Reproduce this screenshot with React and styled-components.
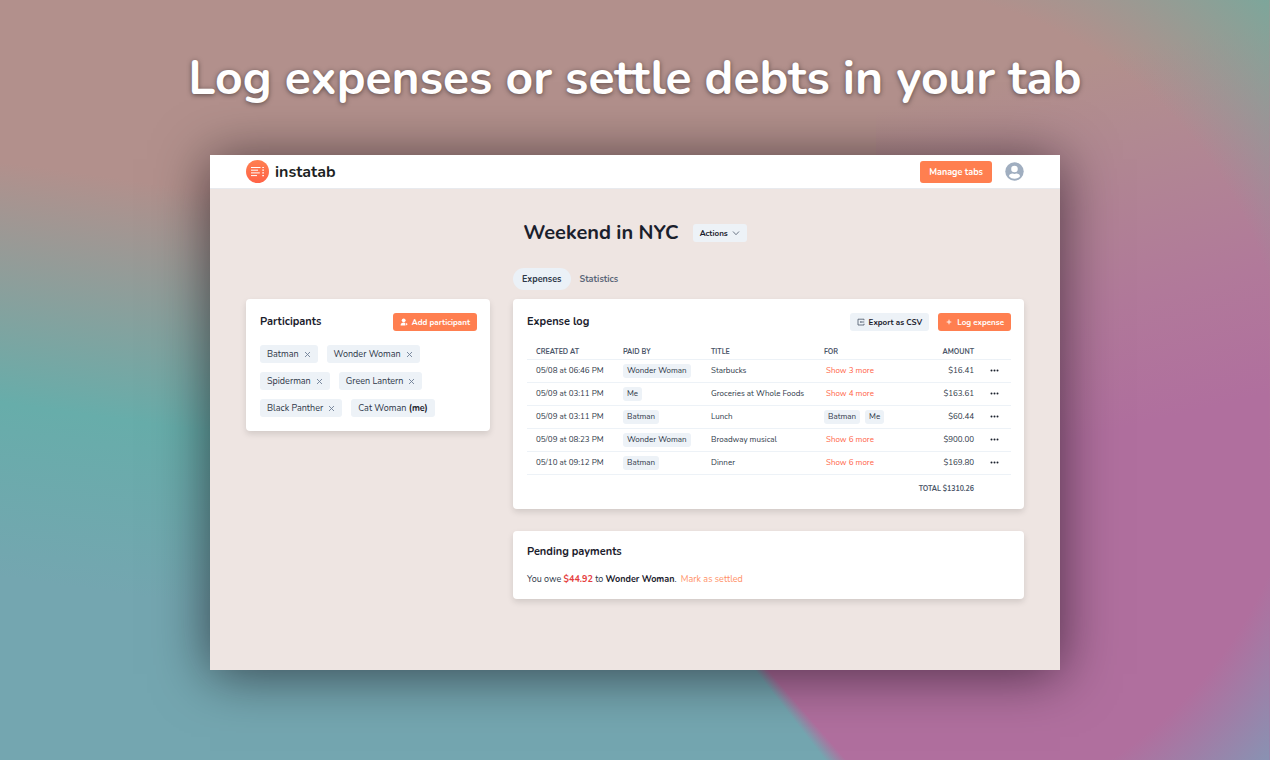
import React from "react";
import styled, { createGlobalStyle } from "styled-components";

const GlobalStyle = createGlobalStyle`
  * {
    box-sizing: border-box;
  }
  body {
    margin: 0;
    font-family: Nunito, "Open Sans", "Noto Sans", sans-serif;
    color: #1a202c;
  }
  button {
    font-family: inherit;
    border: 0;
    cursor: pointer;
    padding: 0;
  }
  a {
    text-decoration: none;
  }
`;

const Page = styled.div`
  min-height: 100vh;
  padding: 48px 16px 90px;
  display: flex;
  flex-direction: column;
  align-items: center;
  background:
    radial-gradient(circle at 0% 105%, rgba(120, 168, 156, 0) 410px, rgba(120, 168, 156, 0.95) 565px) right top / 31% 50% no-repeat,
    radial-gradient(circle at 0% 5%, rgba(130, 152, 182, 0) 430px, rgba(130, 152, 182, 0.95) 545px) right bottom / 31% 50% no-repeat,
    linear-gradient(188deg, #b2908c 28%, #67adaa 57%, #74a6b0 78%) left top / 40% 100% no-repeat,
    linear-gradient(167deg, #b2908c 13%, #b18a91 22%, #b1799a 42%, #b06f9e 57%) right top / 31% 100% no-repeat,
    conic-gradient(
      from 0deg at 50% 68%,
      #b2908c 0deg,
      #b2908c 38deg,
      #b06f9e 90deg,
      #b06f9e 139deg,
      #74a6b0 142deg,
      #74a6b0 250deg,
      #67adaa 279deg,
      #b2908c 300deg,
      #b2908c 360deg
    );
`;

const Headline = styled.h1`
  margin: 0 0 47px;
  font-size: 48px;
  line-height: 60px;
  font-weight: 700;
  text-align: center;
  color: #fff;
  text-shadow: 0 1px 5px rgba(0, 0, 0, 0.5);
`;

const Window = styled.div`
  width: 100%;
  max-width: 850px;
  flex: 1;
  background: #eee5e2;
  box-shadow: 0 4px 52px rgba(10, 0, 10, 0.6);
`;

const Navbar = styled.header`
  display: flex;
  align-items: center;
  justify-content: space-between;
  height: 34px;
  padding: 0 36px;
  background: #fff;
  border-bottom: 1px solid #e8eaee;
`;

const Brand = styled.a`
  display: flex;
  align-items: center;
  gap: 6px;
  font-size: 16px;
  font-weight: 700;
  color: #1d1f23;
`;

const NavRight = styled.div`
  display: flex;
  align-items: center;
  gap: 13px;
`;

const Button = styled.button`
  display: flex;
  align-items: center;
  justify-content: center;
  gap: 4px;
  height: ${({ $tall }) => ($tall ? "22px" : "18px")};
  padding: 0 ${({ $tall }) => ($tall ? "9px" : "7px")};
  border-radius: 3px;
  font-size: ${({ $tall }) => ($tall ? "9px" : "8px")};
  font-weight: 700;
  white-space: nowrap;
  color: ${({ $primary }) => ($primary ? "#fff" : "#1a202c")};
  background: ${({ $primary }) => ($primary ? "#ff7f50" : "#edf2f7")};
`;

const AvatarButton = styled.button`
  display: flex;
  background: none;
`;

const Main = styled.main`
  padding: 32px 36px 71px;
`;

const TitleRow = styled.div`
  display: flex;
  align-items: center;
  justify-content: center;
  gap: 14px;
  height: 24px;

  h2 {
    margin: 0;
    font-size: 20px;
    line-height: 24px;
    font-weight: 700;
  }
`;

const Columns = styled.div`
  display: grid;
  grid-template-columns: 244px minmax(0, 1fr);
  column-gap: 23px;
  align-items: start;
  margin-top: 23px;
`;

const Tabs = styled.div`
  grid-column: 2;
  display: flex;
  height: 22px;
  margin-bottom: 9px;
`;

const Tab = styled.button`
  padding: 0 9px;
  border-radius: 11px;
  font-size: 9px;
  font-weight: 700;
  color: ${({ $active }) => ($active ? "#2d3748" : "#5a6578")};
  background: ${({ $active }) => ($active ? "#ebf1f7" : "none")};
`;

const Card = styled.section`
  padding: ${({ $padding }) => $padding || "14px 13px 14px 14px"};
  border-radius: 4px;
  background: #fff;
  box-shadow: 0 3px 6px rgba(0, 0, 0, 0.12);
`;

const Stack = styled.div`
  display: grid;
  gap: 22px;
`;

const CardHeader = styled.div`
  display: flex;
  align-items: center;
  justify-content: space-between;

  h3 {
    margin: 0;
    font-size: 11px;
    line-height: 18px;
    font-weight: 700;
  }
`;

const Actions = styled.div`
  display: flex;
  gap: 9px;
`;

const People = styled.ul`
  display: flex;
  flex-wrap: wrap;
  gap: 9px;
  margin: 14px 0 0;
  padding: 0;
  list-style: none;
`;

const Person = styled.li`
  display: flex;
  align-items: center;
  gap: 5px;
  height: 18px;
  padding: 0 7px;
  border-radius: 3px;
  font-size: 9px;
  white-space: pre;
  color: #2d3748;
  background: #edf2f7;

  button {
    display: flex;
    background: none;
  }
  b {
    font-weight: 700;
    color: #1a202c;
  }
`;

const Table = styled.table`
  width: 100%;
  margin-top: 13px;
  table-layout: fixed;
  border-collapse: collapse;
  font-size: 8px;
  color: #2d3748;

  th,
  td {
    height: 23px;
    padding: 0 0 0 9px;
    text-align: left;
    white-space: nowrap;
    border-bottom: 1px solid #edf2f7;
  }
  th {
    height: 15px;
    font-size: 7px;
    font-weight: 700;
    color: #4a5568;
    text-transform: uppercase;
  }
  .amount {
    padding: 0;
    text-align: right;
  }
  .menu {
    padding: 0 12px 0 0;
  }
  .menu button {
    display: block;
    margin-left: auto;
    background: none;
  }
  .menu svg {
    display: block;
  }
  tfoot td {
    height: 28px;
    border: 0;
    font-size: 7px;
    font-weight: 700;
    color: #4a5568;
  }
`;

const Col = styled.col`
  width: ${({ $width }) => $width || "auto"};
`;

const Tag = styled.span`
  display: inline-block;
  margin-right: 5px;
  padding: 0 4px;
  border-radius: 3px;
  line-height: 14px;
  background: #edf2f7;
`;

const ShowMore = styled.button`
  padding: 0 2px;
  font-size: 8px;
  color: #ff6347;
  background: none;
`;

const Payment = styled.p`
  margin: 11px 0 0;
  font-size: 9px;
  line-height: 14px;
  color: #2d3748;

  b {
    font-weight: 700;
    color: #1a202c;
  }
  .owed {
    color: #e53e3e;
  }
  button {
    margin-left: 2px;
    font-size: 9px;
    color: #ff8f66;
    background: none;
  }
`;

const LogoIcon = () => (
  <svg width="23" height="23" viewBox="0 0 23 23" aria-hidden="true">
    <defs>
      <linearGradient id="logo" x1="0" y1="0" x2="0" y2="1">
        <stop offset="0" stopColor="#ff7f50" />
        <stop offset="1" stopColor="#ff6347" />
      </linearGradient>
    </defs>
    <circle cx="11.5" cy="11.5" r="11.5" fill="url(#logo)" />
    <path
      d="M5 7.500h9.500M5 10.200h7M5 12.900h8.800M5 15.600h6"
      stroke="#fff"
      strokeWidth="1"
    />
    <path
      d="M16.300 7.500h1.600M16.300 10.200h1.600M16.300 12.900h1.600M16.300 15.600h1.600"
      stroke="#fff"
      strokeWidth="1.2"
    />
  </svg>
);

const AvatarIcon = () => (
  <svg width="19" height="19" viewBox="0 0 19 19" aria-hidden="true">
    <circle cx="9.5" cy="9.5" r="9.2" fill="#a0aec0" />
    <circle cx="9.5" cy="7" r="3.3" fill="#fff" />
    <path
      d="M4 14.200c0-1.800 1.700-2.700 3.600-2.700 1.200.5 2.600.5 3.800 0 1.900 0 3.600.9 3.600 2.700-1.400 1.700-3.300 2.500-5.500 2.500s-4.100-.8-5.500-2.500z"
      fill="#fff"
    />
  </svg>
);

const ChevronIcon = () => (
  <svg width="8" height="8" viewBox="0 0 8 8" aria-hidden="true">
    <path d="M1 2.500l3 3.200 3-3.200" fill="none" stroke="#4a5568" strokeWidth=".8" />
  </svg>
);

const CloseIcon = () => (
  <svg width="7" height="7" viewBox="0 0 7 7" aria-hidden="true">
    <path d="M1 1l5 5M6 1L1 6" stroke="#718096" strokeWidth=".9" />
  </svg>
);

const UserAddIcon = () => (
  <svg width="8" height="8" viewBox="0 0 8 8" aria-hidden="true" fill="#fff">
    <circle cx="3.7" cy="2.3" r="1.9" />
    <path d="M.6 7.400c0-2 1.300-2.900 3.100-2.900.8 0 1.300.2 1.700.5L5 6.200l.6 1.200z" />
    <path d="M6.500 5.200v2M5.500 6.200h2" stroke="#fff" strokeWidth=".8" />
  </svg>
);

const ExportIcon = () => (
  <svg width="8" height="8" viewBox="0 0 8 8" aria-hidden="true">
    <path
      d="M7 2.300V1.200H1v5.800h6V5.700M3.500 4h3.800"
      fill="none"
      stroke="#4a5568"
      strokeWidth=".8"
    />
    <path d="M4.200 2.900v2.200L2.900 4z" fill="#4a5568" />
  </svg>
);

const PlusIcon = () => (
  <svg width="8" height="8" viewBox="0 0 8 8" aria-hidden="true">
    <path d="M4 1.700v4.600M1.700 4h4.600" stroke="#fff" strokeWidth=".9" />
  </svg>
);

const DotsIcon = () => (
  <svg width="9" height="3" viewBox="0 0 9 3" aria-hidden="true" fill="#1a202c">
    <circle cx="1.5" cy="1.5" r="1" />
    <circle cx="4.5" cy="1.5" r="1" />
    <circle cx="7.5" cy="1.5" r="1" />
  </svg>
);

const participants = [
  "Batman",
  "Wonder Woman",
  "Spiderman",
  "Green Lantern",
  "Black Panther",
];

const expenses = [
  { date: "05/08 at 06:46 PM", by: "Wonder Woman", title: "Starbucks", more: 3, amount: "$16.41" },
  { date: "05/09 at 03:11 PM", by: "Me", title: "Groceries at Whole Foods", more: 4, amount: "$163.61" },
  { date: "05/09 at 03:11 PM", by: "Batman", title: "Lunch", people: ["Batman", "Me"], amount: "$60.44" },
  { date: "05/09 at 08:23 PM", by: "Wonder Woman", title: "Broadway musical", more: 6, amount: "$900.00" },
  { date: "05/10 at 09:12 PM", by: "Batman", title: "Dinner", more: 6, amount: "$169.80" },
];

const ExpenseTable = () => (
  <Table>
    <colgroup>
      <Col $width="87px" />
      <Col $width="88px" />
      <Col $width="113px" />
      <Col />
      <Col $width="60px" />
      <Col $width="37px" />
    </colgroup>
    <thead>
      <tr>
        <th>Created at</th>
        <th>Paid by</th>
        <th>Title</th>
        <th>For</th>
        <th className="amount">Amount</th>
        <th className="menu" aria-label="Menu" />
      </tr>
    </thead>
    <tbody>
      {expenses.map((e, i) => (
        <tr key={i}>
          <td>{e.date}</td>
          <td>
            <Tag>{e.by}</Tag>
          </td>
          <td>{e.title}</td>
          <td>
            {e.people ? (
              e.people.map((p) => <Tag key={p}>{p}</Tag>)
            ) : (
              <ShowMore>Show {e.more} more</ShowMore>
            )}
          </td>
          <td className="amount">{e.amount}</td>
          <td className="menu">
            <button aria-label="Expense menu">
              <DotsIcon />
            </button>
          </td>
        </tr>
      ))}
    </tbody>
    <tfoot>
      <tr>
        <td className="amount" colSpan={5}>
          TOTAL $1310.26
        </td>
        <td />
      </tr>
    </tfoot>
  </Table>
);

const App = () => {
  return (
    <>
      <GlobalStyle />
      <Page>
        <Headline>Log expenses or settle debts in your tab</Headline>
        <Window>
          <Navbar>
            <Brand href="#">
              <LogoIcon />
              instatab
            </Brand>
            <NavRight>
              <Button $primary $tall>
                Manage tabs
              </Button>
              <AvatarButton aria-label="Account">
                <AvatarIcon />
              </AvatarButton>
            </NavRight>
          </Navbar>
          <Main>
            <TitleRow>
              <h2>Weekend in NYC</h2>
              <Button>
                Actions
                <ChevronIcon />
              </Button>
            </TitleRow>
            <Columns>
              <Tabs>
                <Tab $active>Expenses</Tab>
                <Tab>Statistics</Tab>
              </Tabs>
              <Card>
                <CardHeader>
                  <h3>Participants</h3>
                  <Button $primary>
                    <UserAddIcon />
                    Add participant
                  </Button>
                </CardHeader>
                <People>
                  {participants.map((name) => (
                    <Person key={name}>
                      {name}
                      <button aria-label={`Remove ${name}`}>
                        <CloseIcon />
                      </button>
                    </Person>
                  ))}
                  <Person>
                    <span>
                      Cat Woman <b>(me)</b>
                    </span>
                  </Person>
                </People>
              </Card>
              <Stack>
                <Card $padding="14px 13px 7px 14px">
                  <CardHeader>
                    <h3>Expense log</h3>
                    <Actions>
                      <Button>
                        <ExportIcon />
                        Export as CSV
                      </Button>
                      <Button $primary>
                        <PlusIcon />
                        Log expense
                      </Button>
                    </Actions>
                  </CardHeader>
                  <ExpenseTable />
                </Card>
                <Card $padding="12px 13px 13px 14px">
                  <CardHeader>
                    <h3>Pending payments</h3>
                  </CardHeader>
                  <Payment>
                    You owe <b className="owed">$44.92</b> to <b>Wonder Woman</b>.{" "}
                    <button>Mark as settled</button>
                  </Payment>
                </Card>
              </Stack>
            </Columns>
          </Main>
        </Window>
      </Page>
    </>
  );
};

export default App;
